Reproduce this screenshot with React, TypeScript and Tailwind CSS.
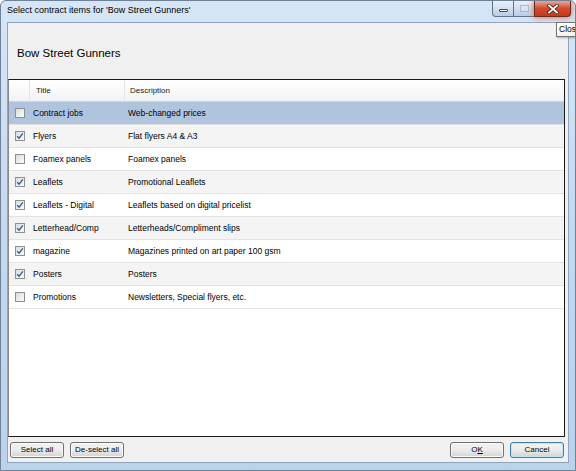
import React from "react";

const ROWS = [
  { title: "Contract jobs", desc: "Web-changed prices", checked: false },
  { title: "Flyers", desc: "Flat flyers A4 & A3", checked: true },
  { title: "Foamex panels", desc: "Foamex panels", checked: false },
  { title: "Leaflets", desc: "Promotional Leaflets", checked: true },
  { title: "Leaflets - Digital", desc: "Leaflets based on digital pricelist", checked: true },
  { title: "Letterhead/Comp", desc: "Letterheads/Compliment slips", checked: true },
  { title: "magazine", desc: "Magazines printed on art paper 100 gsm", checked: true },
  { title: "Posters", desc: "Posters", checked: true },
  { title: "Promotions", desc: "Newsletters, Special flyers, etc.", checked: false },
];

function CheckBox({ checked }: { checked: boolean }) {
  return (
    <span className="flex h-[10px] w-[10px] items-center justify-center border border-[#8e8f8f] bg-gradient-to-br from-[#dcdcdc] to-[#fbfbfb]">
      {checked && (
        <svg width="8" height="8" viewBox="0 0 8 8">
          <path d="M1.2 4.2 L3.1 6.2 L6.9 1.4" fill="none" stroke="#3a5a9e" strokeWidth="1.4" />
        </svg>
      )}
    </span>
  );
}

function Btn({ children, focus }: { children: React.ReactNode; focus?: boolean }) {
  return (
    <button
      className={
        "flex h-[16px] w-[54px] items-center justify-center rounded-[3px] border bg-gradient-to-b from-[#f2f2f2] via-[#ebebeb] to-[#d3d3d3] text-[8px] leading-none text-black " +
        (focus ? "border-[#3c7fb1] shadow-[inset_0_0_0_1px_#c4e5f6]" : "border-[#707070] shadow-[inset_0_0_0_1px_#fbfbfb]")
      }
    >
      {children}
    </button>
  );
}

export default function App() {
  return (
    <div
      className="relative flex h-[471px] w-[576px] flex-col overflow-hidden rounded-t-[6px] border border-[#6e8198] bg-gradient-to-b from-[#d6e6f6] via-[#c4d8ee] to-[#bcd2ea]"
      style={{ fontFamily: '"Liberation Sans", Arial, sans-serif' }}
    >
      {/* title bar */}
      <div className="flex h-[21px] items-start justify-between">
        <div className="pl-[6px] pt-[4px] text-[9px] leading-[11px] text-black">
          Select contract items for 'Bow Street Gunners'
        </div>
        <div className="mr-[4px] flex">
          <div className="flex h-[16px] w-[22px] items-center justify-center rounded-bl-[4px] border border-t-0 border-[#5f7390] bg-gradient-to-b from-[#e9f0f8] via-[#d2e0ef] to-[#b9cde4]">
            <span className="mt-[4px] h-[3px] w-[9px] rounded-[1px] border border-[#3d4a5c] bg-white" />
          </div>
          <div className="flex h-[16px] w-[20px] items-center justify-center border-b border-[#5f7390] bg-gradient-to-b from-[#e9f0f8] via-[#d2e0ef] to-[#b9cde4]">
            <span className="h-[7px] w-[9px] border border-[#9aa8b8] bg-[#dde6f0] opacity-70" />
          </div>
          <div className="flex h-[16px] w-[37px] items-center justify-center rounded-br-[4px] border border-t-0 border-[#6a2a20] bg-gradient-to-b from-[#e9a694] via-[#d24a2c] to-[#c8391b] shadow-[0_0_6px_#e05a2a]">
            <svg width="12" height="10" viewBox="0 0 12 10">
              <path d="M2 1.5 L10 8.5 M10 1.5 L2 8.5" stroke="#3b2420" strokeWidth="3.4" strokeLinecap="square" />
              <path d="M2 1.5 L10 8.5 M10 1.5 L2 8.5" stroke="#ffffff" strokeWidth="1.8" strokeLinecap="square" />
            </svg>
          </div>
        </div>
      </div>

      {/* client area */}
      <div className="mx-[6px] mb-[7px] flex flex-1 flex-col border border-[#8ea5c0] bg-[#f0f0f0]">
        <div className="h-[56px] pl-[9px] pt-[24px] text-[11.5px] leading-[13px] text-black">Bow Street Gunners</div>

        <div className="mr-[3px] flex flex-1 flex-col border border-[#1a1a1a] border-l-[#8a8a8a] bg-white">
          {/* header */}
          <div className="flex h-[22px] items-center border-b border-[#d5d5d5] bg-gradient-to-b from-[#ffffff] via-[#f9f9fa] to-[#f1f2f4] text-[8px] text-[#1b1b1b]">
            <div className="h-full w-[21px] border-r border-[#e3e4e6]" />
            <div className="flex h-full w-[95px] items-center border-r border-[#e3e4e6] pl-[6px]">Title</div>
            <div className="flex h-full items-center pl-[5px]">Description</div>
          </div>
          {ROWS.map((r, i) => (
            <div
              key={r.title}
              className={
                "flex h-[23px] items-center border-b border-[#e2e2e2] text-[8.5px] text-black " +
                (i === 0 ? "bg-[#b0c4de]" : i % 2 === 1 ? "bg-[#f4f4f4]" : "bg-white")
              }
            >
              <div className="flex w-[21px] justify-center pl-[1px]">
                <CheckBox checked={r.checked} />
              </div>
              <div className="w-[95px] pl-[3px]">{r.title}</div>
              <div className="pl-[3px]">{r.desc}</div>
            </div>
          ))}
        </div>

        {/* buttons */}
        <div className="mb-[4px] mt-[5px] flex items-center justify-between pl-[2px] pr-[4px]">
          <div className="flex gap-[6px]">
            <Btn>Select all</Btn>
            <Btn>De-select all</Btn>
          </div>
          <div className="flex gap-[6px]">
            <Btn>
              O<span className="underline">K</span>
            </Btn>
            <Btn focus>Cancel</Btn>
          </div>
        </div>
      </div>

      {/* tooltip */}
      <div className="absolute left-[555px] top-[21px] flex h-[15px] w-[30px] items-center border border-[#767676] bg-gradient-to-b from-[#ffffff] to-[#f3f3e6] pl-[2px] text-[8.5px] text-black shadow-[1px_1px_2px_rgba(0,0,0,0.3)]">
        Clos
      </div>
    </div>
  );
}
